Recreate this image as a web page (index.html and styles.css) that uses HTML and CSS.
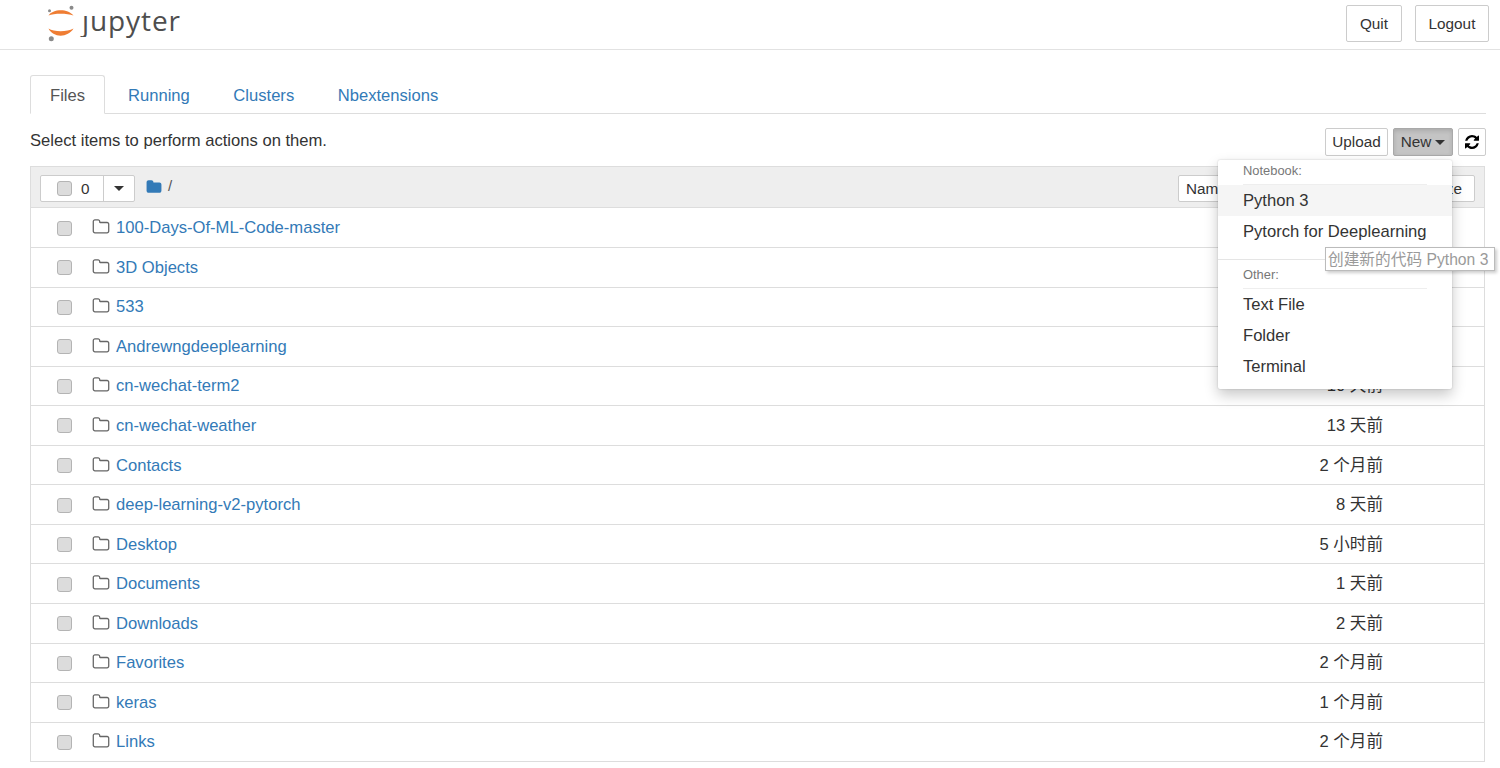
FILE: index.html
```html
<!DOCTYPE html>
<html lang="en">
<head>
<meta charset="utf-8">
<title>Home</title>
<link rel="stylesheet" href="styles.css">
</head>
<body>
<svg class="defs" width="0" height="0" aria-hidden="true">
  <symbol id="folder-o" viewBox="0 0 1792 1792"><path d="M1600 1312v-704q0-40-28-68t-68-28h-704q-40 0-68-28t-28-68v-64q0-40-28-68t-68-28h-320q-40 0-68 28t-28 68v960q0 40 28 68t68 28h1216q40 0 68-28t28-68zm128-704v704q0 92-66 158t-158 66h-1216q-92 0-158-66t-66-158v-960q0-92 66-158t158-66h320q92 0 158 66t66 158v32h672q92 0 158 66t66 158z"/></symbol>
</svg>
<header class="site-header">
  <a class="logo" href="#">
    <svg class="logo-mark" viewBox="0 0 40 40" width="40" height="40" aria-hidden="true">
      <path class="logo-arc" d="M7.500 10.500C11 4.500 26 2.500 32.500 10.500C26 8 13 8 7.500 10.500Z"/>
      <path class="logo-arc" d="M7.500 23.500C13 27 26 27 32.500 23.500C27 33 12 33 7.500 23.500Z"/>
      <circle class="logo-dot" cx="8.500" cy="5.800" r="1.500"/>
      <circle class="logo-dot" cx="30.500" cy="2.800" r="2"/>
      <circle class="logo-dot" cx="10.300" cy="33.800" r="2.500"/>
    </svg>
    <span class="logo-text"><span class="logo-j">j</span>upyter</span>
  </a>
  <div class="header-actions">
    <button class="btn btn-head btn-quit">Quit</button>
    <button class="btn btn-head btn-logout">Logout</button>
  </div>
</header>
<main class="page">
  <nav class="tabs">
    <a class="tab active" href="#">Files</a>
    <a class="tab" href="#">Running</a>
    <a class="tab" href="#">Clusters</a>
    <a class="tab" href="#">Nbextensions</a>
  </nav>
  <div class="toolbar">
    <span class="hint">Select items to perform actions on them.</span>
    <div class="toolbar-actions">
      <button class="btn btn-sm">Upload</button>
      <button class="btn btn-sm btn-open">New<span class="caret"></span></button>
      <button class="btn btn-sm btn-icon" aria-label="Refresh">
        <svg viewBox="0 0 1536 1536" width="14" height="14"><path d="M1511 928q0 5-1 7-64 268-268 434.500t-478 166.500q-146 0-282.500-55t-243.500-157l-129 129q-19 19-45 19t-45-19-19-45v-448q0-26 19-45t45-19h448q26 0 45 19t19 45-19 45l-137 137q71 66 161 102t187 36q134 0 250-65t186-179q11-17 53-117 8-23 30-23h192q13 0 22.500 9.500t9.500 22.500zm25-800v448q0 26-19 45t-45 19h-448q-26 0-45-19t-19-45 19-45l138-138q-148-137-349-137-134 0-250 65t-186 179q-11 17-53 117-8 23-30 23h-199q-13 0-22.500-9.500t-9.500-22.500v-7q65-268 270-434.500t480-166.500q146 0 284 55.500t245 156.500l130-129q19-19 45-19t45 19 19 45z"/></svg>
      </button>
      <div class="menu">
        <div class="menu-label">Notebook:</div>
        <a class="menu-item hover" href="#">Python 3</a>
        <a class="menu-item" href="#">Pytorch for Deeplearning</a>
        <div class="menu-sep"></div>
        <div class="menu-label">Other:</div>
        <a class="menu-item" href="#">Text File</a>
        <a class="menu-item" href="#">Folder</a>
        <a class="menu-item" href="#">Terminal</a>
      </div>
      <div class="tooltip">创建新的代码 Python 3</div>
    </div>
  </div>
  <section class="list">
    <div class="list-head">
      <div class="select-group">
        <span class="select-main"><input class="check" type="checkbox"><span class="count">0</span></span>
        <span class="select-caret"><span class="caret dark"></span></span>
      </div>
      <svg class="crumb-icon" viewBox="0 0 1792 1792" width="16" height="16" aria-hidden="true"><path d="M1728 608v704q0 92-66 158t-158 66h-1216q-92 0-158-66t-66-158v-960q0-92 66-158t158-66h320q92 0 158 66t66 158v32h672q92 0 158 66t66 158z"/></svg>
      <span class="crumb">/</span>
      <div class="sort-group">
        <button class="btn btn-sort btn-name">Name</button>
        <button class="btn btn-sort btn-size">Size</button>
      </div>
    </div>
    <div class="row"><input class="check" type="checkbox"><svg class="folder"><use href="#folder-o"/></svg><a class="name" href="#">100-Days-Of-ML-Code-master</a><span class="date"></span></div>
    <div class="row"><input class="check" type="checkbox"><svg class="folder"><use href="#folder-o"/></svg><a class="name" href="#">3D Objects</a><span class="date"></span></div>
    <div class="row"><input class="check" type="checkbox"><svg class="folder"><use href="#folder-o"/></svg><a class="name" href="#">533</a><span class="date"></span></div>
    <div class="row"><input class="check" type="checkbox"><svg class="folder"><use href="#folder-o"/></svg><a class="name" href="#">Andrewngdeeplearning</a><span class="date"></span></div>
    <div class="row"><input class="check" type="checkbox"><svg class="folder"><use href="#folder-o"/></svg><a class="name" href="#">cn-wechat-term2</a><span class="date">10 天前</span></div>
    <div class="row"><input class="check" type="checkbox"><svg class="folder"><use href="#folder-o"/></svg><a class="name" href="#">cn-wechat-weather</a><span class="date">13 天前</span></div>
    <div class="row"><input class="check" type="checkbox"><svg class="folder"><use href="#folder-o"/></svg><a class="name" href="#">Contacts</a><span class="date">2 个月前</span></div>
    <div class="row"><input class="check" type="checkbox"><svg class="folder"><use href="#folder-o"/></svg><a class="name" href="#">deep-learning-v2-pytorch</a><span class="date">8 天前</span></div>
    <div class="row"><input class="check" type="checkbox"><svg class="folder"><use href="#folder-o"/></svg><a class="name" href="#">Desktop</a><span class="date">5 小时前</span></div>
    <div class="row"><input class="check" type="checkbox"><svg class="folder"><use href="#folder-o"/></svg><a class="name" href="#">Documents</a><span class="date">1 天前</span></div>
    <div class="row"><input class="check" type="checkbox"><svg class="folder"><use href="#folder-o"/></svg><a class="name" href="#">Downloads</a><span class="date">2 天前</span></div>
    <div class="row"><input class="check" type="checkbox"><svg class="folder"><use href="#folder-o"/></svg><a class="name" href="#">Favorites</a><span class="date">2 个月前</span></div>
    <div class="row"><input class="check" type="checkbox"><svg class="folder"><use href="#folder-o"/></svg><a class="name" href="#">keras</a><span class="date">1 个月前</span></div>
    <div class="row"><input class="check" type="checkbox"><svg class="folder"><use href="#folder-o"/></svg><a class="name" href="#">Links</a><span class="date">2 个月前</span></div>
  </section>
</main>
</body>
</html>
```
FILE: styles.css
```css
* { box-sizing: border-box; }
html, body { margin: 0; height: 768px; overflow: hidden; }
body {
  background: #fff;
  color: #333;
  font-family: "Liberation Sans", "Noto Sans CJK SC", sans-serif;
  font-size: 16.600px;
}
a { text-decoration: none; color: #337ab7; }
.defs { position: absolute; }

.site-header {
  height: 50px;
  border-bottom: 1px solid #e2e2e2;
  display: flex;
  justify-content: space-between;
  padding: 5px 11px 0 41px;
}
.logo { display: flex; align-items: flex-start; height: 40px; margin-top: -1px; }
.logo-mark { flex: none; margin-top: 1px; }
.logo-arc { fill: #ef7d33; }
.logo-dot { fill: #8a8a8a; }
.logo-text {
  font-family: "Open Sans", sans-serif;
  font-size: 28px;
  line-height: 33px;
  color: #4e4e4e;
  letter-spacing: 0.900px;
  margin-left: 1px;
}
.logo-j { display: inline-block; clip-path: inset(11px 0 0 -4px); }
.header-actions { display: flex; gap: 13px; }

.btn {
  font: inherit;
  color: #333;
  background: #fff;
  border: 1px solid #ccc;
  border-radius: 2px;
  padding: 0;
}
.btn-head { height: 37px; font-size: 15.300px; }
.btn-quit { width: 56px; }
.btn-logout { width: 74px; }

.page { padding: 0 14px 0 30px; }

.tabs {
  display: flex;
  height: 64px;
  padding-top: 25px;
  border-bottom: 1px solid #ddd;
}
.tab { padding: 0 20px; line-height: 41px; height: 39px; margin-right: 3.500px; }
.tab.active {
  width: 75px;
  padding: 0 19px;
  color: #555;
  border: 1px solid #ddd;
  border-bottom-color: #fff;
  border-radius: 3px 3px 0 0;
  background: #fff;
  line-height: 39px;
  margin-right: 3px;
}

.toolbar {
  display: flex;
  justify-content: space-between;
  align-items: flex-start;
  height: 52px;
  padding-top: 14px;
}
.hint { line-height: 26px; }
.toolbar-actions { position: relative; display: flex; gap: 5px; }
.btn-sm { height: 28px; padding: 0 0 1px; width: 63px; font-size: 15.300px; }
.btn-open {
  background: #c4c4c4;
  border-color: #a9a9a9;
  box-shadow: inset 0 2px 4px rgba(0,0,0,.13);
  width: 60px;
}
.btn-icon { width: 28px; padding: 0; display: flex; align-items: center; justify-content: center; }
.caret {
  display: inline-block;
  margin-left: 4px;
  vertical-align: middle;
  border-top: 5px solid #333;
  border-left: 5px solid transparent;
  border-right: 5px solid transparent;
}

.menu {
  position: absolute;
  top: 32px;
  left: -107px;
  width: 234px;
  height: 229px;
  background: #fff;
  border-radius: 2px;
  box-shadow: 0 6px 14px rgba(0,0,0,.22), 0 0 2px rgba(0,0,0,.2);
  z-index: 2;
  padding-top: 3px;
}
.menu-label {
  margin: 0 25px;
  height: 22px;
  line-height: 15px;
  font-size: 12.900px;
  color: #777;
  border-bottom: 1px solid #eee;
}
.menu-item {
  display: block;
  height: 31.300px;
  line-height: 31.300px;
  padding-left: 25px;
  color: #333;
}
.menu-item.hover { background: #f5f5f5; }
.menu-sep { height: 1px; background: #e5e5e5; margin: 11px 0 7px; }
.tooltip {
  position: absolute;
  top: 119px;
  left: 0;
  width: 170px;
  height: 24px;
  padding-left: 2px;
  font-size: 15.700px;
  line-height: 23px;
  white-space: nowrap;
  color: #9a9a9a;
  background: #fff;
  border: 1px solid #bbb;
  box-shadow: 2px 2px 3px rgba(0,0,0,.2);
  z-index: 3;
}

.list { border: 1px solid #ddd; border-bottom: 0; border-top: 0; margin-right: 1px; }
.list-head {
  height: 42.400px;
  margin: 0 -1px;
  padding: 8px 9px 0 9px;
  background: #eee;
  border: 1px solid #ddd;
  display: flex;
  align-items: flex-start;
}
.select-group {
  display: flex;
  width: 95px;
  height: 27px;
  background: #fff;
  border: 1px solid #ccc;
  border-radius: 2px;
  margin-right: 11px;
}
.select-main {
  width: 63px;
  display: flex;
  align-items: center;
  padding-left: 16px;
  border-right: 1px solid #ccc;
  font-size: 15.300px;
}
.count { margin-left: 9px; }
.select-caret { flex: 1; display: flex; align-items: center; justify-content: center; }
.caret.dark { margin: 0; }
.check {
  appearance: none;
  margin: 0;
  flex: none;
  width: 15px;
  height: 15px;
  background: #dcdcdc;
  border: 1px solid #b4b4b4;
  border-radius: 3px;
}
.crumb-icon { fill: #337ab7; margin-top: 4px; }
.crumb { margin-left: 6px; color: #555; font-size: 15px; line-height: 22px; }
.sort-group { margin-left: auto; display: flex; width: 297px; justify-content: space-between; }
.btn-sort { height: 27px; font-size: 15.300px; background: #fff; padding: 0 7px; }
.btn-name { text-align: left; }
.btn-size { width: 60px; text-align: right; padding-right: 12px; }

.row {
  height: 39.570px;
  display: flex;
  align-items: center;
  padding: 1px 0 0 26px;
  border-bottom: 1px solid #ddd;
}
.folder { flex: none; width: 18px; height: 18px; margin-left: 20px; fill: #666; position: relative; top: -1px; }
.name { margin-left: 6px; }
.date { margin: 0 101px 4px auto; width: 100px; text-align: right; }
```
